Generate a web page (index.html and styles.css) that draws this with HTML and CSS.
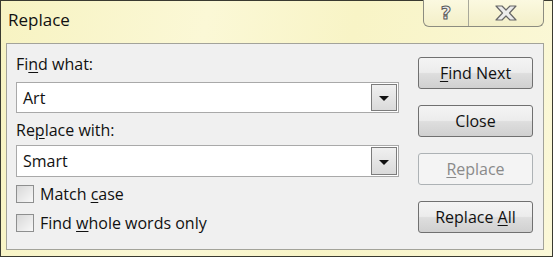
FILE: index.html
```html
<!DOCTYPE html>
<html lang="en">
<head>
    <meta charset="UTF-8">
    <title>Replace</title>
    <link rel="stylesheet" href="styles.css">
</head>
<body>
    <div class="window">
        <div class="titlebar">
            <div class="title">Replace</div>
            <div class="caption-buttons">
                <div class="cap-btn help"><span>?</span></div>
                <div class="cap-btn close">
                    <svg width="24" height="16" viewBox="0 0 24 16">
                        <path d="M2 1 H8 L12 5 L16 1 H22 L15.5 8 L22 15 H16 L12 11 L8 15 H2 L8.5 8 Z" fill="#ececec" stroke="#666" stroke-width="1.2" stroke-linejoin="round"/>
                    </svg>
                </div>
            </div>
        </div>

        <div class="panel">
            <div class="fields">
                <div class="label">Fi<u>n</u>d what:</div>
                <div class="combo">
                    <span class="value">Art</span>
                    <span class="drop"><i></i></span>
                </div>
                <div class="label second">Re<u>p</u>lace with:</div>
                <div class="combo low">
                    <span class="value">Smart</span>
                    <span class="drop"><i></i></span>
                </div>
                <label class="check first"><span class="box"></span><span>Match <u>c</u>ase</span></label>
                <label class="check"><span class="box"></span><span>Find <u>w</u>hole words only</span></label>
            </div>
            <div class="buttons">
                <div class="btn"><span><u>F</u>ind Next</span></div>
                <div class="btn"><span>Close</span></div>
                <div class="btn disabled"><span><u>R</u>eplace</span></div>
                <div class="btn"><span>Replace <u>A</u>ll</span></div>
            </div>
        </div>
    </div>
</body>
</html>
```

FILE: styles.css
```css
body {
    margin: 0;
    font-family: "Open Sans", Arial, sans-serif;
    font-size: 16px;
    color: #111;
}
.window {
    width: 553px;
    height: 257px;
    box-sizing: border-box;
    border: 1px solid #3a3a30;
    background: linear-gradient(100deg, #f7f3c2 0%, #fbf8d6 35%, #f8f4c6 60%, #fbf8d8 100%);
    display: flex;
    flex-direction: column;
}
.titlebar {
    height: 42px;
    display: flex;
    justify-content: space-between;
    align-items: flex-start;
}
.title {
    padding: 8px 0 0 7px;
    line-height: 22px;
    font-size: 17px;
    color: #111;
}
.caption-buttons {
    display: flex;
    margin: -1px 8px 0 0;
    border: 1px solid #8c8c80;
    border-top: none;
    border-radius: 0 0 6px 6px;
    height: 26px;
    background: linear-gradient(#fbf9e0, #f3efc8);
}
.cap-btn {
    display: flex;
    align-items: center;
    justify-content: center;
}
.cap-btn.help {
    width: 44px;
    border-right: 1px solid #a8a89a;
}
.cap-btn.help span {
    font-family: "DejaVu Sans", sans-serif;
    font-weight: bold;
    font-size: 18px;
    color: #eeeeee;
    -webkit-text-stroke: 1px #5a5a5a;
    margin-top: -2px;
}
.cap-btn.close {
    width: 74px;
}
.panel {
    flex: 1;
    margin: 0 8px 6px 5px;
    border: 1px solid #a3a39a;
    background: #f0f0f0;
    display: flex;
    justify-content: space-between;
    padding: 0 10px 0 9px;
}
.fields {
    width: 383px;
    padding-top: 10px;
}
.label {
    line-height: 20px;
}
.label.second {
    margin-top: 7px;
}
u {
    text-decoration-thickness: 1px;
    text-underline-offset: 2px;
}
.combo {
    margin-top: 8px;
    height: 31px;
    box-sizing: border-box;
    border: 1px solid #a9a9a9;
    background: #fff;
    display: flex;
    align-items: center;
    justify-content: space-between;
    padding: 1px 1px 1px 6px;
}
.combo.low {
    margin-top: 5px;
    height: 32px;
}
.drop {
    width: 26px;
    height: 100%;
    box-sizing: border-box;
    border: 1px solid #7c7c7c;
    background: linear-gradient(#f0f0f0, #dadada);
    display: flex;
    align-items: center;
    justify-content: center;
}
.drop i {
    width: 0;
    height: 0;
    border-left: 5px solid transparent;
    border-right: 5px solid transparent;
    border-top: 5px solid #111;
    margin-top: 2px;
}
.check {
    display: flex;
    align-items: center;
    gap: 6px;
    height: 20px;
    margin-top: 9px;
}
.check.first {
    margin-top: 7px;
}
.box {
    width: 16px;
    height: 16px;
    border: 1px solid #8e8f8f;
    background: linear-gradient(135deg, #d8d8d8, #f8f8f8);
}
.buttons {
    padding-top: 13px;
    display: flex;
    flex-direction: column;
    gap: 16px;
}
.btn {
    width: 115px;
    height: 32px;
    box-sizing: border-box;
    border: 1px solid #707070;
    border-radius: 3px;
    background: linear-gradient(#f4f4f4 0%, #ececec 48%, #dedede 52%, #d0d0d0 100%);
    display: flex;
    align-items: center;
    justify-content: center;
    color: #111;
}
.btn.disabled {
    border-color: #adb2b5;
    background: #f4f4f4;
    color: #8a8a8a;
}
```
